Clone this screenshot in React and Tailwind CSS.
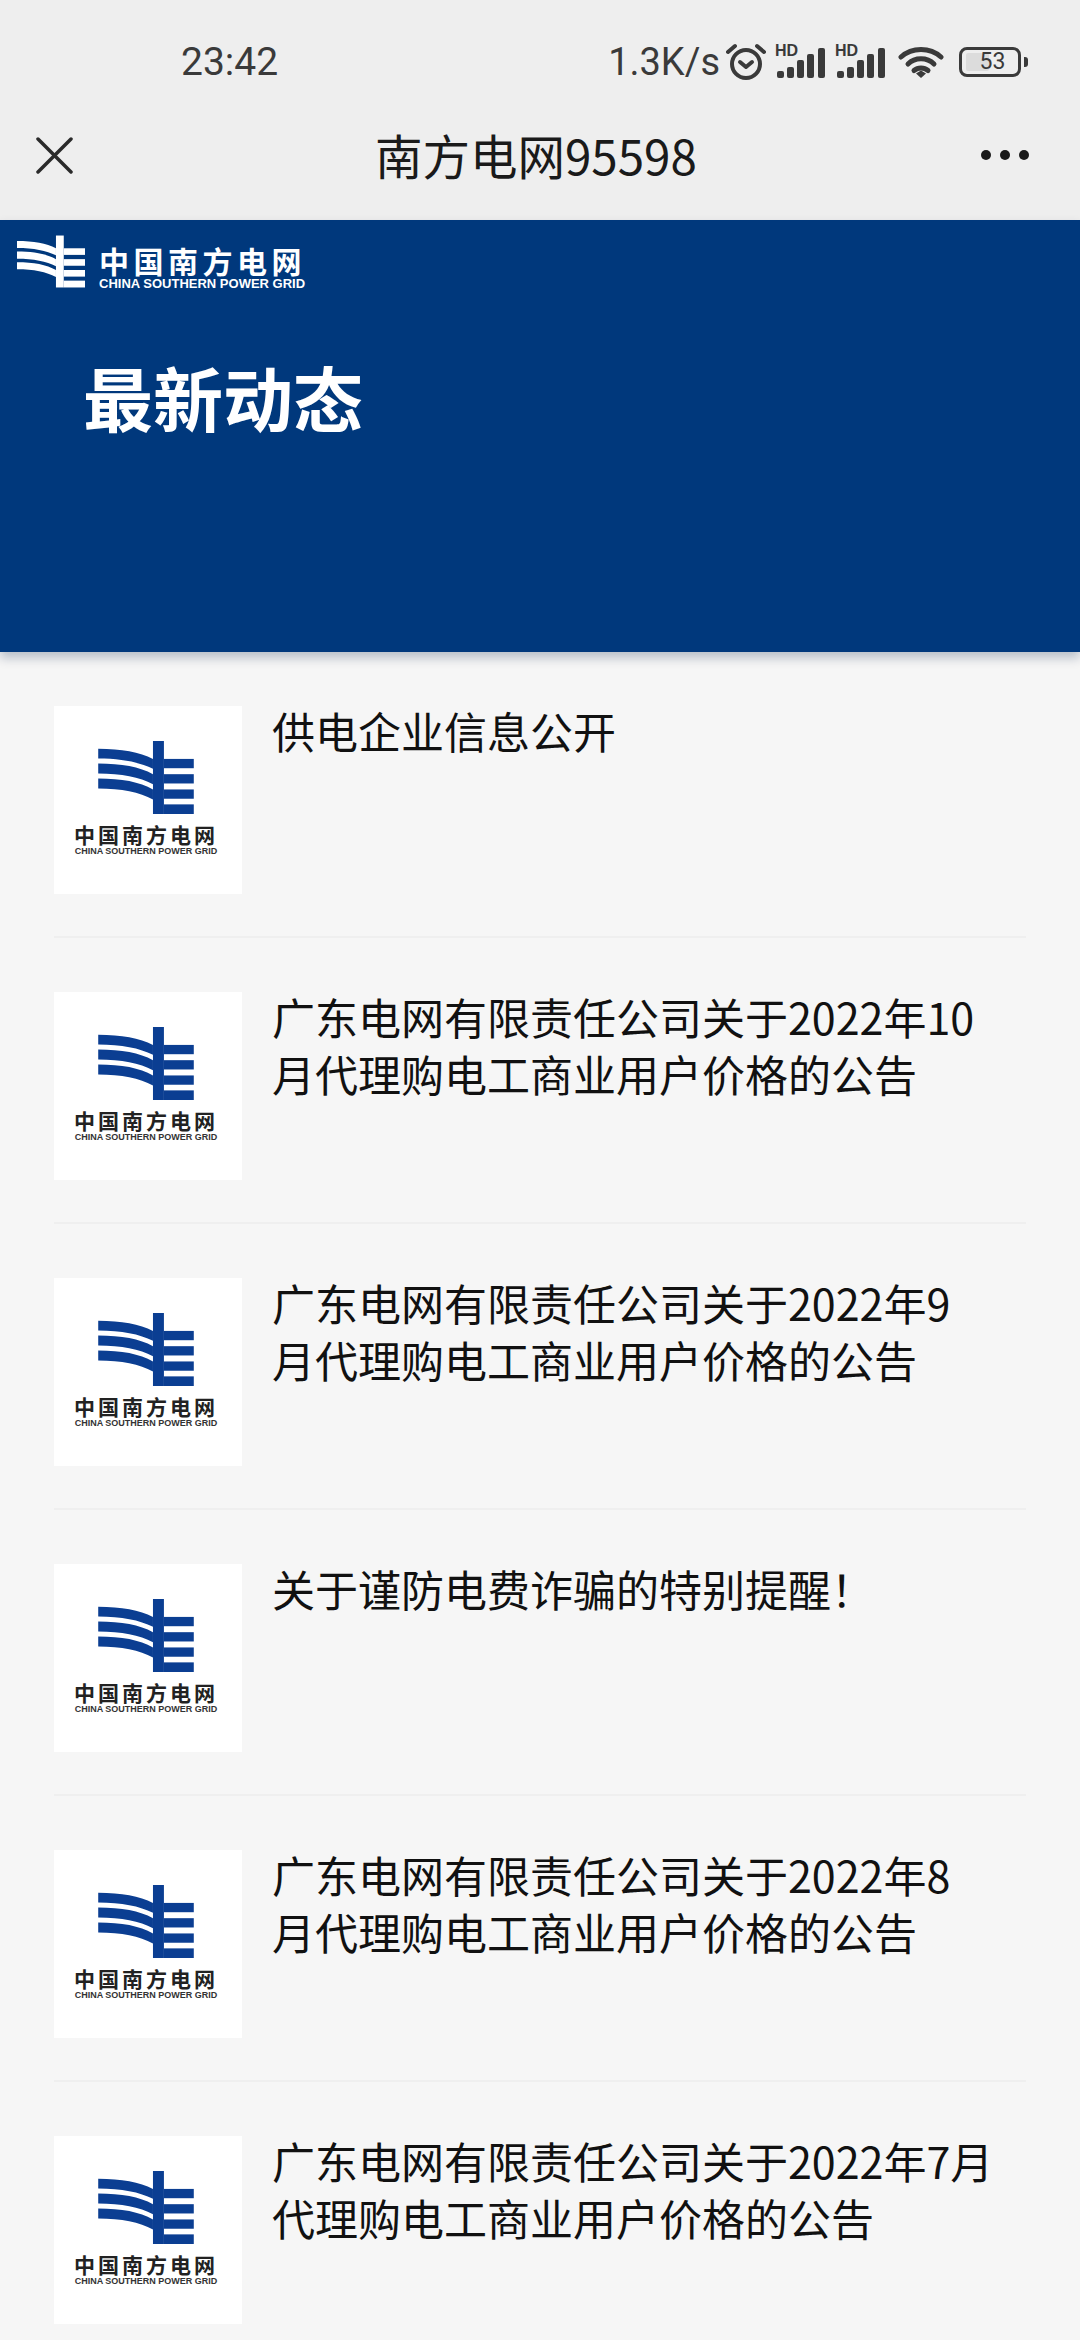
import React from "react";

const news = [
  "供电企业信息公开",
  "广东电网有限责任公司关于2022年10\n月代理购电工商业用户价格的公告",
  "广东电网有限责任公司关于2022年9\n月代理购电工商业用户价格的公告",
  "关于谨防电费诈骗的特别提醒！",
  "广东电网有限责任公司关于2022年8\n月代理购电工商业用户价格的公告",
  "广东电网有限责任公司关于2022年7月\n代理购电工商业用户价格的公告",
];

// power grid mark, curved lines running into the pylon
const LogoMark = ({ className }) => (
  <svg viewBox="0 0 288 220" className={className} fill="currentColor">
    <rect x="165" y="0" width="33" height="220" />
    <rect x="198" y="54" width="90" height="28" />
    <rect x="198" y="100" width="90" height="28" />
    <rect x="198" y="146" width="90" height="28" />
    <rect x="198" y="191" width="90" height="29" />
    <path d="M0 23C70 23 125 33 165 54V84C125 64 70 53 0 53Z" />
    <path d="M0 68C70 68 125 78 165 100V130C125 109 70 98 0 98Z" />
    <path d="M0 113C70 113 125 123 165 146V176C125 154 70 143 0 143Z" />
  </svg>
);

const Signal = () => (
  <div className="relative w-[48px] h-[32px] shrink-0">
    <svg viewBox="0 0 48 30" className="absolute left-0 bottom-0 w-[48px] h-[30px]" fill="#3a3a3a">
      <rect x="0" y="23" width="7" height="7" rx="2" />
      <rect x="10" y="19" width="7" height="11" rx="2" />
      <rect x="20" y="12" width="7" height="18" rx="2" />
      <rect x="30" y="6" width="7" height="24" rx="2" />
      <rect x="41" y="0" width="7" height="30" rx="2" />
    </svg>
    <span className="absolute left-[-2px] top-[-3px] text-[16px] leading-[16px] font-bold font-['Liberation_Sans'] text-[#3a3a3a]">
      HD
    </span>
  </div>
);

const Thumb = () => (
  <div className="flex flex-col w-[188px] h-[188px] shrink-0 bg-white pt-[35px] pr-[4px] items-center">
    <LogoMark className="w-[96px] h-[73px] text-[#0b3e92]" />
    <div className="mt-[9px] text-[21px] leading-[22px] tracking-[3px] font-bold text-[#222] whitespace-nowrap">
      中国南方电网
    </div>
    <div className="mt-[2px] text-[9px] leading-[9px] font-bold font-['Liberation_Sans'] text-[#333] whitespace-nowrap">
      CHINA SOUTHERN POWER GRID
    </div>
  </div>
);

const NewsRow = ({ title }) => (
  <div className="flex pt-[54px] pb-[42px] border-b-2 border-[#efefef]">
    <Thumb />
    <p className="ml-[30px] mt-[-4px] text-[43px] leading-[57px] text-[#111] whitespace-pre-line">{title}</p>
  </div>
);

export default function App() {
  return (
    <div className="w-[1080px] h-[2340px] overflow-hidden bg-[#f6f6f6] font-['Noto_Sans_CJK_SC',sans-serif]">
      <div className="h-[220px] bg-[#eeeeee]">
        {/* status bar */}
        <div className="flex items-center h-[124px] pl-[181px] text-[#3a3a3a] font-['Roboto']">
          <span className="text-[39px] leading-[44px]">23:42</span>
          <span className="ml-[330px] text-[38px] leading-[44px]">1.3K/s</span>
          <svg viewBox="0 0 40 38" className="ml-[6px] w-[40px] h-[38px]" fill="none" stroke="#3a3a3a" strokeWidth="4" strokeLinecap="round">
            <circle cx="20" cy="21" r="14" />
            <path d="M14 19l6 5 6-5" strokeLinejoin="round" />
            <path d="M2 9l7-6M38 9l-7-6" />
          </svg>
          <div className="ml-[11px]"><Signal /></div>
          <div className="ml-[12px]"><Signal /></div>
          <svg viewBox="0 0 46 32" className="ml-[13px] w-[46px] h-[32px]" fill="none" stroke="#3a3a3a" strokeWidth="5" strokeLinecap="round">
            <path d="M3 11C14 1 32 1 43 11" />
            <path d="M10 18C17 11 29 11 36 18" />
            <path d="M16 24.500C20 21 26 21 30 24.500" />
            <path d="M18 27.500L23 32L28 27.500L23 24.500Z" fill="#3a3a3a" stroke="none" />
          </svg>
          <div className="relative flex items-center justify-center ml-[15px] w-[62px] h-[30px] rounded-[8px] border-[3px] border-[#3a3a3a]">
            <div className="absolute left-[4px] top-[3px] bottom-[3px] w-[23px] rounded-[2px] bg-[#dcdcdc]" />
            <span className="relative text-[23px] leading-[24px] ml-[5px]">53</span>
          </div>
          <div className="ml-[3px] w-[4px] h-[10px] rounded-r-[3px] bg-[#3a3a3a]" />
        </div>

        {/* title bar */}
        <div className="flex items-center h-[62px] pl-[36px]">
          <svg viewBox="0 0 37 37" className="w-[37px] h-[37px]" stroke="#2a2a2a" strokeWidth="3.500" strokeLinecap="round">
            <path d="M2 2l33 33M35 2L2 35" />
          </svg>
          <div className="ml-[302px] text-[47.5px] leading-[60px] text-[#1a1a1a]">南方电网95598</div>
          <div className="flex ml-auto mr-[51px] gap-[9px]">
            <div className="w-[10px] h-[10px] rounded-full bg-[#1a1a1a]" />
            <div className="w-[10px] h-[10px] rounded-full bg-[#1a1a1a]" />
            <div className="w-[10px] h-[10px] rounded-full bg-[#1a1a1a]" />
          </div>
        </div>
      </div>

      {/* banner */}
      <div className="h-[432px] bg-[#00387c] shadow-[0_6px_10px_rgba(0,30,70,0.25)] pt-[15px] text-white">
        <div className="flex pl-[17px]">
          <LogoMark className="w-[68px] h-[53px]" />
          <div className="ml-[14px] pt-[10px]">
            <div className="text-[30px] leading-[30px] font-bold tracking-[4.500px] whitespace-nowrap">中国南方电网</div>
            <div className="mt-[3px] text-[13px] leading-[11px] font-bold font-['Liberation_Sans'] whitespace-nowrap">
              CHINA SOUTHERN POWER GRID
            </div>
          </div>
        </div>
        <h1 className="ml-[83px] mt-[63px] text-[70px] leading-[90px] font-bold">最新动态</h1>
      </div>

      <div className="px-[54px]">
        {news.map((title) => (
          <NewsRow key={title} title={title} />
        ))}
      </div>
    </div>
  );
}
